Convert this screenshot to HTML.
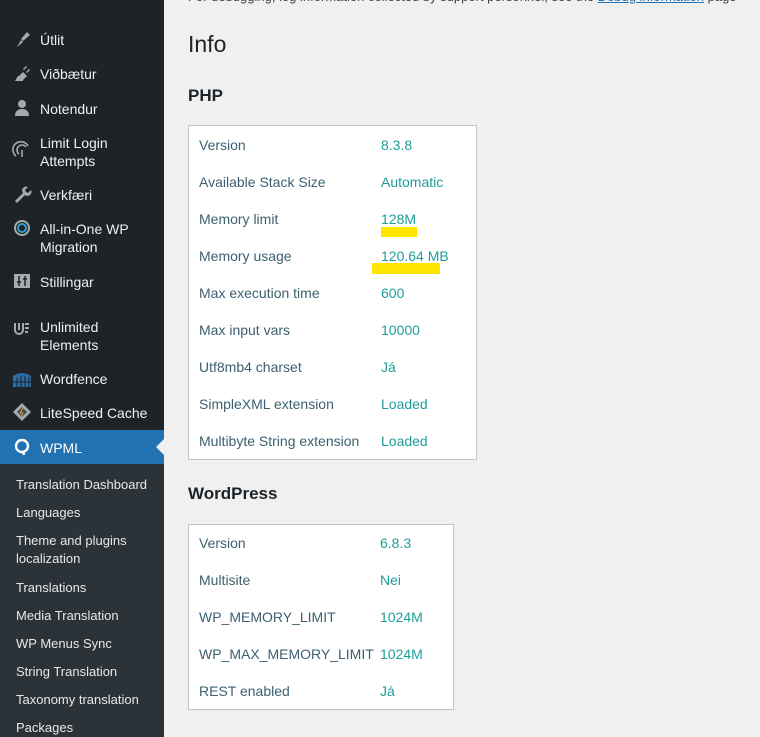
<!DOCTYPE html>
<html><head><meta charset="utf-8"><style>
*{margin:0;padding:0;box-sizing:border-box}
body{width:760px;height:737px;overflow:hidden;background:#f0f0f1;font-family:"Liberation Sans",sans-serif;position:relative}
#sb{position:absolute;left:0;top:0;width:164px;height:737px;background:#1d2327}
.it{position:absolute;left:40px;color:#f0f0f1;font-size:14px;line-height:18px}
.ic{position:absolute;left:12px;width:20px;height:20px}
#wp{position:absolute;left:0;top:430px;width:164px;height:34px;background:#2271b1}
#sub{position:absolute;left:0;top:464px;width:164px;height:273px;background:#2c3338}
.s{position:absolute;left:16px;color:#e6e8ea;font-size:13px;line-height:18px}
.c{position:absolute;font-size:14px;color:#1d2327}
.box{position:absolute;background:#fff;border:1px solid #c3c4c7}
.l{position:absolute;font-size:14px;color:#3c6070}
.v{position:absolute;font-size:14px;color:#1e9e9a}
.hl{position:absolute;background:#ffe600}
</style></head><body>
<div style="position:absolute;left:188px;top:-11px;font-size:13px;color:#3c434a;white-space:nowrap">For debugging, log information collected by support personnel, see the <span style="color:#2271b1;text-decoration:underline">Debug information</span> page</div>
<div id="sb">
<svg class="ic" style="top:29px" viewBox="0 0 20 20"><path d="M5 18l4-7 2 2-6 5zM9 10l6-7 3 3-7 6z" fill="#a7aaad"/></svg>
<div class="it" style="top:31px">Útlit</div>
<svg class="ic" style="top:63px" viewBox="0 0 20 20"><path d="M3 18l3-5 1 0 4-4 4 4-4 4 0 1zM11 6l3-3 1 1-3 3zM14 9l3-3 1 1-3 3z" fill="#a7aaad"/></svg>
<div class="it" style="top:65px">Viðbætur</div>
<svg class="ic" style="top:98px" viewBox="0 0 20 20"><circle cx="10" cy="6" r="4" fill="#a7aaad"/><path d="M3 18c0-5 3-7 7-7s7 2 7 7z" fill="#a7aaad"/></svg>
<div class="it" style="top:100px">Notendur</div>
<svg class="ic" style="top:140px" viewBox="0 0 20 20" fill="none" stroke="#a7aaad" stroke-width="1.6"><path d="M4 16a8 8 0 1 1 12-10M7 14a5 5 0 1 1 7-7M10 17v-7"/></svg>
<div class="it" style="top:134px">Limit Login<br>Attempts</div>
<svg class="ic" style="top:184px" viewBox="0 0 20 20"><path d="M3 17l8-8a4 4 0 0 1 5-6l-3 3 1 2 2 1 3-3a4 4 0 0 1-6 5l-8 8z" fill="#a7aaad"/></svg>
<div class="it" style="top:186px">Verkfæri</div>
<svg class="ic" style="top:218px" viewBox="0 0 20 20" fill="none" stroke-width="2"><circle cx="10" cy="10" r="7" stroke="#a7aaad"/><circle cx="10" cy="10" r="4" stroke="#2ea2cc"/></svg>
<div class="it" style="top:220px">All-in-One WP<br>Migration</div>
<svg class="ic" style="top:271px" viewBox="0 0 20 20"><rect x="2" y="3" width="16" height="14" fill="#a7aaad"/><path d="M7 5v10M13 5v10M5 11h4M11 8h4" stroke="#1d2327" stroke-width="1.5"/></svg>
<div class="it" style="top:273px">Stillingar</div>
<svg class="ic" style="top:318px" viewBox="0 0 20 20" fill="none" stroke="#a7aaad" stroke-width="2"><path d="M3 5v7a4 4 0 0 0 8 0V5M7 5v7M13 6h4M13 10h4M13 14h3"/></svg>
<div class="it" style="top:318px">Unlimited<br>Elements</div>
<svg class="ic" style="top:369px" viewBox="0 0 20 20"><path d="M1 18V7q9-6 18 0v11z" fill="#2e6ca6"/><path d="M5 8v10M9 7v11M13 7v11M17 8v10M1 13h18" stroke="#1d2327"/></svg>
<div class="it" style="top:370px">Wordfence</div>
<svg class="ic" style="top:402px" viewBox="0 0 20 20"><path d="M10 1l9 9-9 9-9-9z" fill="#a7aaad"/><path d="M10 5l5 5-5 5-5-5z" fill="#3c4a55"/><path d="M11 6l-3 5h3l-2 4" stroke="#e0a030" fill="none"/></svg>
<div class="it" style="top:404px">LiteSpeed Cache</div>
<div id="wp"></div>
<svg class="ic" style="top:437px" viewBox="0 0 20 20" fill="none" stroke="#fff" stroke-width="2.4"><circle cx="10" cy="9" r="6"/><path d="M11 14l1 4"/></svg>
<div class="it" style="top:439px;color:#fff">WPML</div>
<div style="position:absolute;left:156px;top:439px;border:8px solid transparent;border-right-color:#f0f0f1;border-left:0"></div>
<div id="sub">
<div class="s" style="top:12px">Translation Dashboard</div>
<div class="s" style="top:40px">Languages</div>
<div class="s" style="top:68px">Theme and plugins<br>localization</div>
<div class="s" style="top:115px">Translations</div>
<div class="s" style="top:143px">Media Translation</div>
<div class="s" style="top:171px">WP Menus Sync</div>
<div class="s" style="top:199px">String Translation</div>
<div class="s" style="top:227px">Taxonomy translation</div>
<div class="s" style="top:255px">Packages</div>
</div>
</div>
<div class="c" style="left:188px;top:31px;font-size:23px">Info</div>
<div class="c" style="left:188px;top:86px;font-size:17px;font-weight:bold">PHP</div>
<div class="box" style="left:188px;top:125px;width:289px;height:335px"></div>
<div class="l" style="left:199px;top:137px">Version</div><div class="v" style="left:381px;top:137px">8.3.8</div>
<div class="l" style="left:199px;top:174px">Available Stack Size</div><div class="v" style="left:381px;top:174px">Automatic</div>
<div class="hl" style="left:381px;top:227px;width:36px;height:10px"></div>
<div class="hl" style="left:372px;top:263px;width:68px;height:11px"></div>
<div class="l" style="left:199px;top:211px">Memory limit</div><div class="v" style="left:381px;top:211px">128M</div>
<div class="l" style="left:199px;top:248px">Memory usage</div><div class="v" style="left:381px;top:248px">120.64 MB</div>
<div class="l" style="left:199px;top:285px">Max execution time</div><div class="v" style="left:381px;top:285px">600</div>
<div class="l" style="left:199px;top:322px">Max input vars</div><div class="v" style="left:381px;top:322px">10000</div>
<div class="l" style="left:199px;top:359px">Utf8mb4 charset</div><div class="v" style="left:381px;top:359px">Já</div>
<div class="l" style="left:199px;top:396px">SimpleXML extension</div><div class="v" style="left:381px;top:396px">Loaded</div>
<div class="l" style="left:199px;top:433px">Multibyte String extension</div><div class="v" style="left:381px;top:433px">Loaded</div>
<div class="c" style="left:188px;top:484px;font-size:17px;font-weight:bold">WordPress</div>
<div class="box" style="left:188px;top:524px;width:266px;height:186px"></div>
<div class="l" style="left:199px;top:535px">Version</div><div class="v" style="left:380px;top:535px">6.8.3</div>
<div class="l" style="left:199px;top:572px">Multisite</div><div class="v" style="left:380px;top:572px">Nei</div>
<div class="l" style="left:199px;top:609px">WP_MEMORY_LIMIT</div><div class="v" style="left:380px;top:609px">1024M</div>
<div class="l" style="left:199px;top:646px">WP_MAX_MEMORY_LIMIT</div><div class="v" style="left:380px;top:646px">1024M</div>
<div class="l" style="left:199px;top:683px">REST enabled</div><div class="v" style="left:380px;top:683px">Já</div>
</body></html>
